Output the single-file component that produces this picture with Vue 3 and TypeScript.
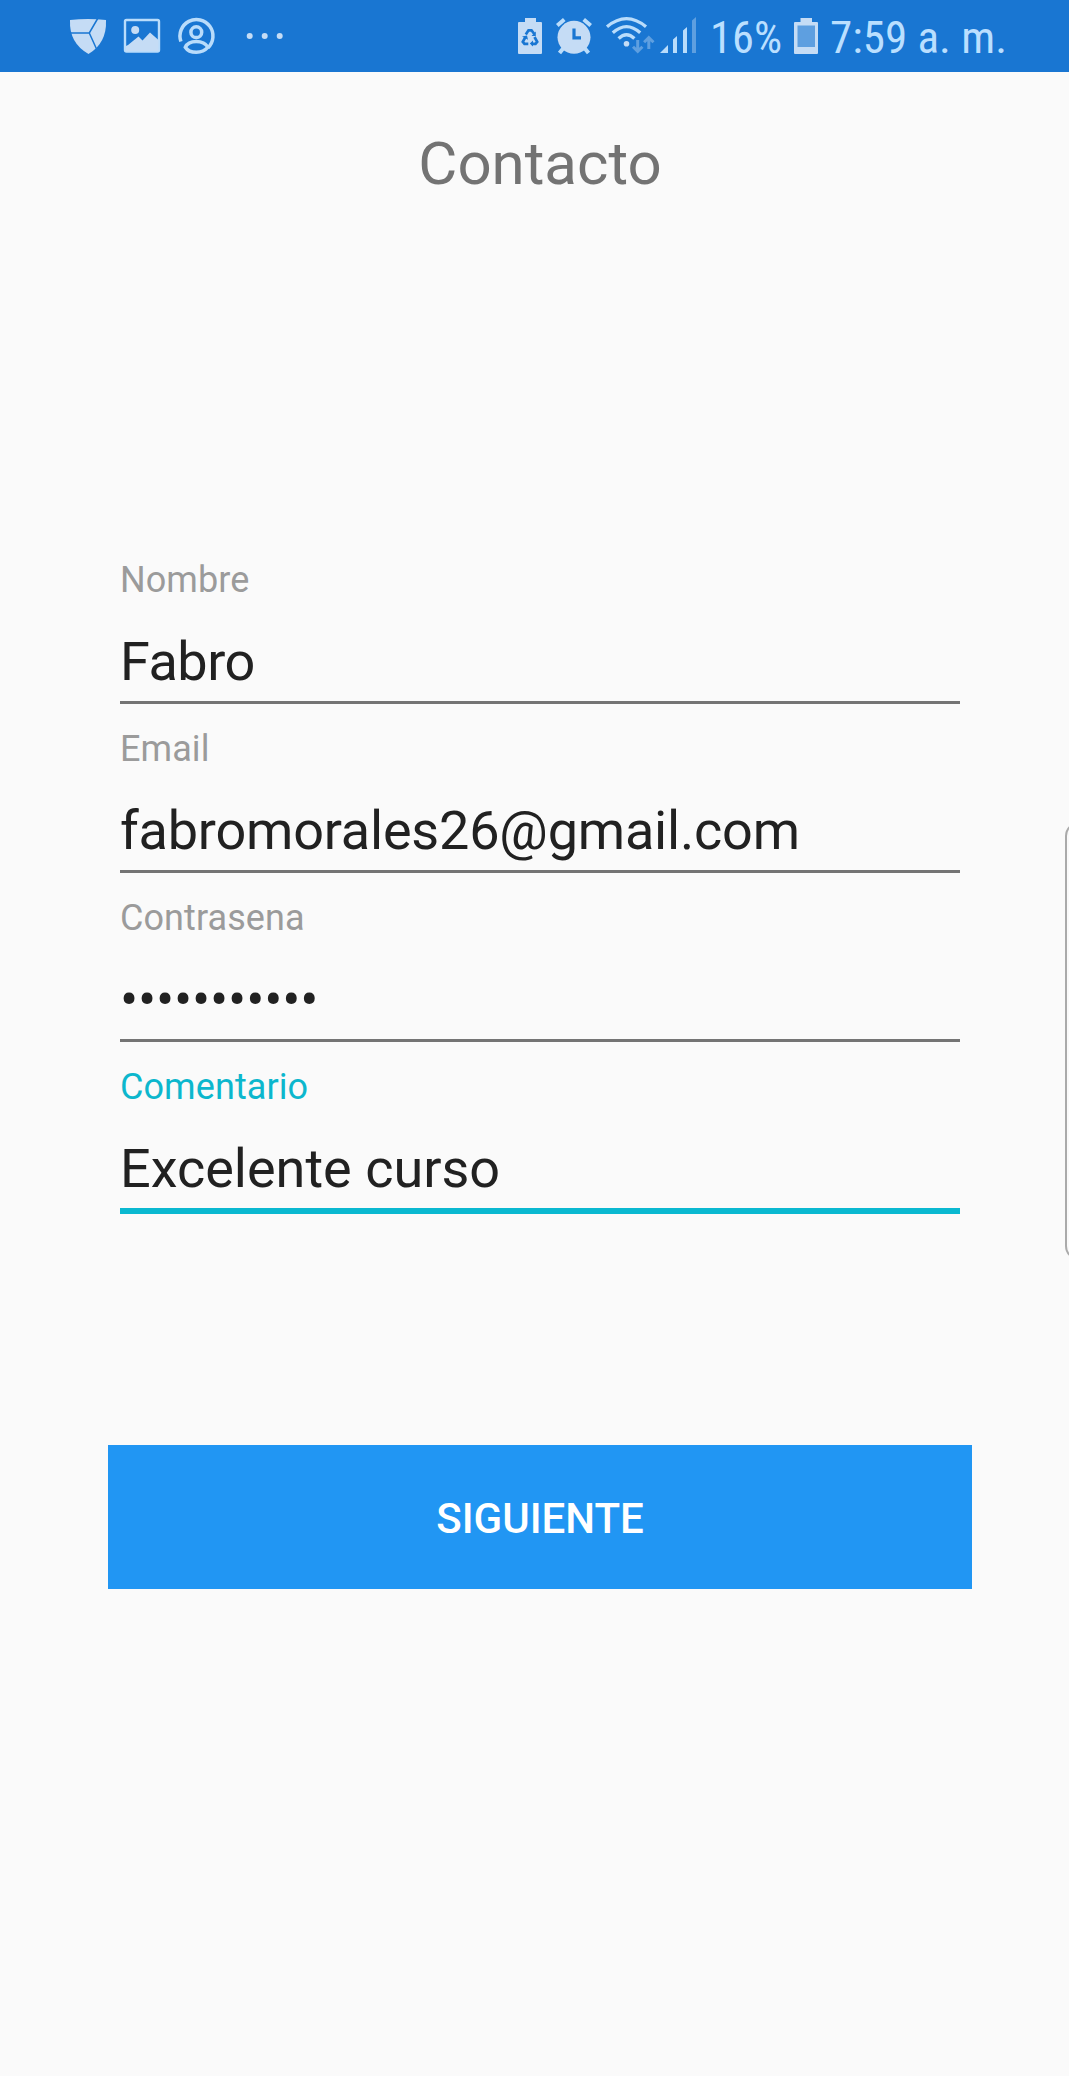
<script setup lang="ts">
interface Field {
  id: string
  label: string
  value: string
  focused?: boolean
}

const fields: Field[] = [
  { id: 'name', label: 'Nombre', value: 'Fabro' },
  { id: 'email', label: 'Email', value: 'fabromorales26@gmail.com' },
  { id: 'password', label: 'Contrasena', value: '•••••••••••' },
  { id: 'comment', label: 'Comentario', value: 'Excelente curso', focused: true },
]
</script>

<template>
  <div class="screen">
    <header class="status">
      <div class="group">
        <svg class="shield" width="40" height="40" viewBox="68 16 40 40">
          <path d="M70 20Q88 18 106 20Q107 43 88.500 54Q69 43 70 20Z" fill="#c5dcf5" />
          <path d="M69 33H89.300L98 18M89.300 33L97 50" fill="none" stroke="#1976d2" stroke-width="1.500" />
        </svg>
        <svg class="photo" width="40" height="40" viewBox="122 16 40 40">
          <rect x="125" y="20" width="34" height="31.500" rx="1.500" fill="none" stroke="#b9dcfb" stroke-width="2.400" />
          <circle cx="135.200" cy="30" r="4" fill="#c5dcf5" />
          <path d="M128 45L138.500 36.500L142.500 40.500L150 32.500L158.500 40V51H126V46Z" fill="#c5dcf5" />
        </svg>
        <svg class="person" width="40" height="40" viewBox="176 16 40 40">
          <g fill="none" stroke="#b9dcfb" stroke-width="3.500">
            <path d="M180.900 41.500A16.500 16.500 0 1 1 208 47.800" />
            <circle cx="196.300" cy="32.200" r="5.400" />
            <path d="M185.300 47.200Q188 41.500 196.300 41.500Q204.500 41.500 208 47.200Q203.500 52.300 196.300 52.300Q188.500 52.300 185.300 47.200Z" />
          </g>
        </svg>
        <svg class="dots" width="38" height="40" viewBox="246 16 38 40" fill="#c5dcf5">
          <circle cx="249.700" cy="36" r="3" />
          <circle cx="264.700" cy="36" r="3" />
          <circle cx="279.700" cy="36" r="3" />
        </svg>
      </div>

      <div class="group">
        <svg width="24" height="40" viewBox="518 16 24 40">
          <path d="M525 18H536V22H541Q542 22 542 23V53Q542 54 541 54H519Q518 54 518 53V23Q518 22 519 22H525Z" fill="#c5dcf5" />
          <g fill="none" stroke="#1976d2" stroke-width="2.700">
            <path d="M525.800 34.500L528.500 30.300H531.500L534.300 34" />
            <path d="M525.500 37L522.800 41.800L524.500 43.800H528.300" />
            <path d="M534.500 37L537.200 41.800L535.500 43.800H531.500" />
          </g>
          <path d="M535.800 31.500V36H531.500ZM522 36.500L527 35.500L528 39.800ZM533 40.500V46.500L529.800 43.600Z" fill="#1976d2" />
        </svg>
        <svg class="alarm" width="38" height="40" viewBox="555 16 38 40">
          <g stroke="#b9dcfb" stroke-width="4" fill="none">
            <path d="M557.300 25.500L564.300 19.500M583.700 19.500L590.700 25.500M563.500 48L559.500 53M584.500 48L588.500 53" />
          </g>
          <circle cx="574" cy="37.300" r="16.500" fill="#c5dcf5" />
          <path d="M574 28.500V37.800H581" fill="none" stroke="#1976d2" stroke-width="3.200" />
        </svg>
        <svg class="wifi" width="50" height="40" viewBox="605 16 50 40">
          <g fill="none" stroke="#b9dcfb" stroke-width="3.300">
            <path d="M607 26.700Q626.500 10.500 646 26.700" />
            <path d="M612.800 32.800Q626.500 20.500 640.200 32.800" />
            <path d="M618.600 38.500Q626.500 30.800 634.400 38.500" />
          </g>
          <circle cx="626.500" cy="43.700" r="2.800" fill="#c5dcf5" />
          <g fill="none" stroke="#5e9fe0" stroke-width="3">
            <path d="M637.700 40V51M633 46.700L637.700 51.300L642.400 46.700M648.800 49V38M644.100 42.300L648.800 37.700L653.500 42.300" />
          </g>
        </svg>
        <svg class="signal" width="38" height="40" viewBox="659 16 38 40" fill="#b9dcfb">
          <path d="M660 53L668 45V53ZM673 53V39.500L677 36V53ZM683 53V30.500L687 27V53Z" />
          <path d="M692 53V20.500L696 17V53Z" fill="#5e9fe0" />
        </svg>
        <svg class="percent" width="72" height="72" viewBox="710 0 72 72">
          <text x="710" y="52.700" textLength="72" lengthAdjust="spacingAndGlyphs">16%</text>
        </svg>
        <svg class="battery" width="24" height="40" viewBox="794 16 24 40">
          <path d="M800.500 18H812V22H817Q818 22 818 23V53Q818 54 817 54H795Q794 54 794 53V23Q794 22 795 22H800.500Z" fill="#c5dcf5" />
          <rect x="797.500" y="25.500" width="17.500" height="21.500" fill="#5e9fe0" />
        </svg>
        <svg class="clock" width="178" height="72" viewBox="829 0 178 72">
          <text x="830" y="52.700" textLength="177" lengthAdjust="spacingAndGlyphs">7:59 a. m.</text>
        </svg>
      </div>
    </header>

    <main class="content">
      <h1 class="title">Contacto</h1>
      <form class="form">
        <div v-for="field in fields" :key="field.id" class="field" :class="[field.id, { focused: field.focused }]">
          <span class="label">{{ field.label }}</span>
          <span class="value">{{ field.value }}</span>
          <span class="line"></span>
        </div>
      </form>
      <button class="next" type="button">SIGUIENTE</button>
    </main>

    <div class="edge-panel"></div>
  </div>
</template>

<style>
body {
  margin: 0;
  background: #fafafa;
}
</style>

<style scoped>
.screen {
  position: relative;
  width: 1069px;
  height: 2076px;
  overflow: hidden;
  background: #fafafa;
  font-family: Roboto, sans-serif;
}

.status {
  display: flex;
  justify-content: space-between;
  box-sizing: border-box;
  height: 72px;
  padding: 0 62px 0 68px;
  background: #1976d2;
}

.group {
  display: flex;
  align-items: center;
}

.group svg {
  display: block;
  flex: none;
}

.group text {
  font-family: 'Roboto Condensed', Roboto, sans-serif;
  font-size: 45px;
  fill: #badfff;
}

.photo,
.person {
  margin-left: 14px;
}

.dots {
  margin-left: 30px;
}

.alarm {
  margin-left: 13px;
}

.wifi {
  margin-left: 12px;
}

.signal {
  margin-left: 4px;
}

.percent {
  margin-left: 13px;
}

.battery {
  margin-left: 12px;
}

.clock {
  margin-left: 11px;
}

.content {
  display: flex;
  flex-direction: column;
  padding: 56px 97px 0 108px;
}

.title {
  margin: 0;
  color: #737373;
  font-size: 60px;
  font-weight: 400;
  line-height: 71px;
  text-align: center;
}

.form {
  margin: 336px 12px 0;
}

.field {
  display: flex;
  flex-direction: column;
  box-sizing: border-box;
  height: 169px;
  padding-top: 24px;
}

.label {
  color: #9b9b9b;
  font-size: 36px;
  line-height: 42px;
  letter-spacing: 0.08px;
}

.value {
  margin-top: 29px;
  color: #212121;
  font-size: 54px;
  line-height: 63px;
  white-space: nowrap;
}

.name .value {
  letter-spacing: -0.5px;
}

.email .value,
.password .value {
  letter-spacing: -0.2px;
}

.line {
  flex: none;
  height: 3px;
  margin-top: 8px;
  background: #747474;
}

.focused {
  height: 172px;
}

.focused .label {
  color: #0cb7cd;
}

.focused .line {
  height: 6px;
  background: #0ab8d0;
}

.next {
  height: 144px;
  margin-top: 231px;
  padding: 3px 0 0;
  border: 0;
  background: #2196f3;
  color: #fff;
  font-family: Roboto, sans-serif;
  font-size: 42px;
  font-weight: 500;
  line-height: 50px;
}

.edge-panel {
  position: absolute;
  top: 822px;
  left: 1065px;
  box-sizing: border-box;
  width: 40px;
  height: 438px;
  border: 2px solid #aaa;
  border-radius: 14px;
}
</style>
